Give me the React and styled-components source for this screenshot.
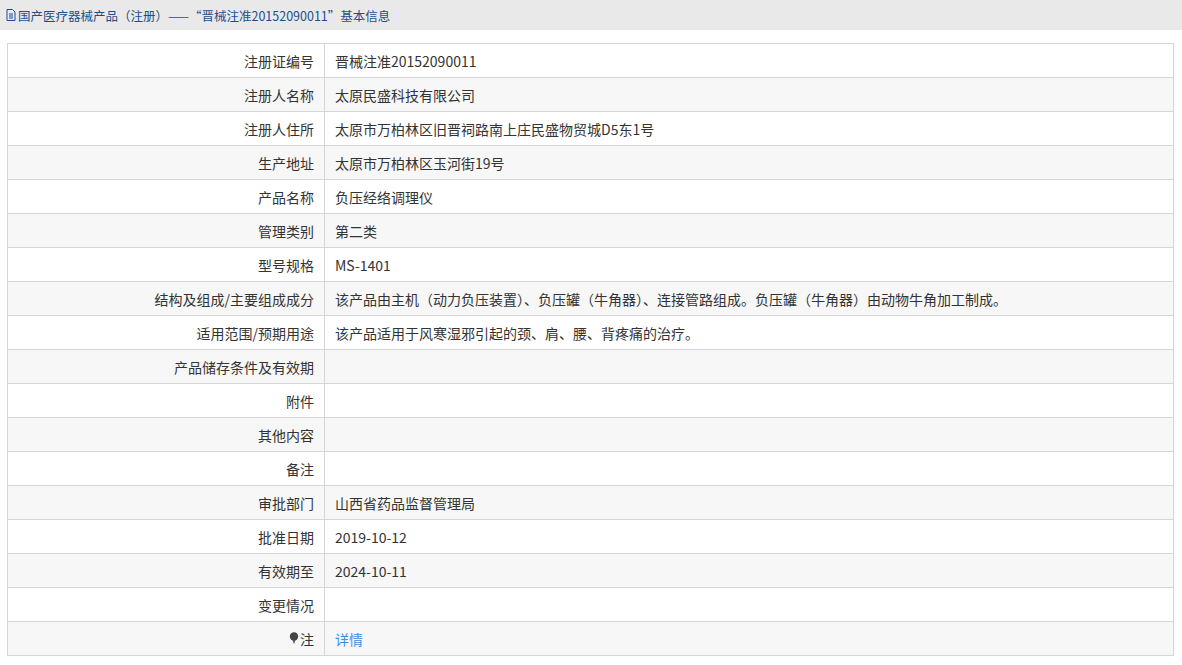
import styled, { createGlobalStyle } from "styled-components";

const Global = createGlobalStyle`
  body { margin: 0; background: #fff; font-family: "Noto Sans CJK SC", "Open Sans", sans-serif; }
`;

const rows = [
  ["注册证编号", "晋械注准20152090011"],
  ["注册人名称", "太原民盛科技有限公司"],
  ["注册人住所", "太原市万柏林区旧晋祠路南上庄民盛物贸城D5东1号"],
  ["生产地址", "太原市万柏林区玉河街19号"],
  ["产品名称", "负压经络调理仪"],
  ["管理类别", "第二类"],
  ["型号规格", "MS-1401"],
  ["结构及组成/主要组成成分", "该产品由主机（动力负压装置）、负压罐（牛角器）、连接管路组成。负压罐（牛角器）由动物牛角加工制成。"],
  ["适用范围/预期用途", "该产品适用于风寒湿邪引起的颈、肩、腰、背疼痛的治疗。"],
  ["产品储存条件及有效期", ""],
  ["附件", ""],
  ["其他内容", ""],
  ["备注", ""],
  ["审批部门", "山西省药品监督管理局"],
  ["批准日期", "2019-10-12"],
  ["有效期至", "2024-10-11"],
  ["变更情况", ""],
];

const Header = styled.div`
  height: 30px;
  background: #e9e9e9;
  display: flex;
  align-items: center;
  padding-left: 6px;
  font-size: 12.5px;
  color: #1d4f8c;
  gap: 2px;
`;

const Table = styled.div`
  margin: 13px 8px 0 7px;
  border: 1px solid #d6d6d6;
  border-bottom: none;
`;

const Row = styled.div`
  display: grid;
  grid-template-columns: 317px 1fr;
  height: 33px;
  border-bottom: 1px solid #d6d6d6;
  background: ${(p) => (p.$alt ? "#f7f7f7" : "#fff")};
  font-size: 14px;
  color: #333;
`;

const Label = styled.div`
  display: flex;
  align-items: center;
  justify-content: flex-end;
  padding-right: 10px;
  border-right: 1px solid #d6d6d6;
  gap: 1px;
`;

const Value = styled.div`
  display: flex;
  align-items: center;
  padding-left: 10px;
  color: ${(p) => (p.$link ? "#3b8fe6" : "#333")};
`;

const DocIcon = () => (
  <svg width="10" height="12" viewBox="0 0 10 12">
    <path d="M1 .5h5.5L9 3v8.5H1z" fill="none" stroke="#1d4f8c" />
    <path d="M3 5h4M3 7h4M3 9h4" stroke="#1d4f8c" />
  </svg>
);

const Pin = () => (
  <svg width="10" height="13" viewBox="0 0 10 13">
    <circle cx="5" cy="4.5" r="4.2" fill="#444" />
    <path d="M3.8 8.3l1.2 4 1.2-4z" fill="#444" />
  </svg>
);

export default function App() {
  return (
    <>
      <Global />
      <Header>
        <DocIcon />
        <span>国产医疗器械产品（注册）——“晋械注准20152090011”基本信息</span>
      </Header>
      <Table>
        {rows.map(([k, v], i) => (
          <Row key={k} $alt={i % 2 === 1}>
            <Label>{k}</Label>
            <Value>{v}</Value>
          </Row>
        ))}
        <Row $alt>
          <Label>
            <Pin />注
          </Label>
          <Value $link>详情</Value>
        </Row>
      </Table>
    </>
  );
}
